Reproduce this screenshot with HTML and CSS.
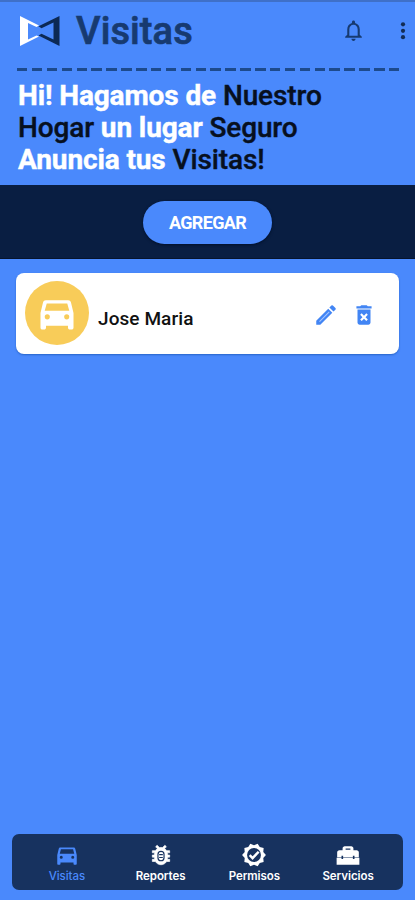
FILE: index.html
```html
<!DOCTYPE html>
<html lang="es">
<head>
<meta charset="utf-8">
<title>Visitas</title>
<link rel="stylesheet" href="styles.css">
</head>
<body>
<svg class="defs" width="0" height="0">
<symbol id="car" viewBox="0 0 24 24"><path d="M19.600 6.200C19.400 5.500 18.900 5 18.100 5H5.900c-.8 0-1.300.5-1.500 1.200L3 12v8c0 .55.45 1 1 1h1c.55 0 1-.45 1-1v-1h12v1c0 .55.45 1 1 1h1c.55 0 1-.45 1-1v-8zM6.700 15.500a1.400 1.400 0 1 1 0-2.800 1.400 1.400 0 0 1 0 2.800zm10.600 0a1.400 1.400 0 1 1 0-2.800 1.400 1.400 0 0 1 0 2.800zM5.300 10.800l1.100-4h11.200l1.100 4z"/></symbol>
</svg>
<div class="app">
<header class="top">
<svg class="logo" viewBox="0 0 40 32"><path fill="#fff" fill-rule="evenodd" d="M0 1l19 9.500-2.500 1.500-8.500-4v16.500l8.500-4 2.500 1L0 31z"/><path fill="#0c2954" fill-rule="evenodd" d="M39.500 1v30L18.500 20.500l3-1.800 12 5.800V7.500L21.500 13.300l-3-2z"/></svg>
<h1>Visitas</h1>
<svg class="bell" viewBox="0 0 24 24"><path d="M12 22c1.100 0 2-.9 2-2h-4c0 1.100.9 2 2 2zm6-6v-5c0-3.070-1.630-5.640-4.500-6.320V4c0-.83-.67-1.500-1.500-1.500s-1.500.67-1.500 1.500v.68C7.640 5.360 6 7.920 6 11v5l-2 2v1h16v-1zm-2 1H8v-6c0-2.480 1.510-4.500 4-4.500s4 2.020 4 4.500z"/></svg>
<svg class="more" viewBox="0 0 6 20"><circle cx="3" cy="3.300" r="2.100"/><circle cx="3" cy="9.800" r="2.100"/><circle cx="3" cy="16.200" r="2.100"/></svg>
</header>
<div class="dashes"></div>
<h2><span>Hi! Hagamos de <b>Nuestro</b></span><span><b>Hogar</b> un lugar <b>Seguro</b></span><span>Anuncia tus <b>Visitas!</b></span></h2>
<section class="band"><button>AGREGAR</button></section>
<article class="card">
<div class="avatar"><svg><use href="#car"/></svg></div>
<p>Jose Maria</p>
<svg class="act edit" viewBox="0 0 24 24"><path d="M3 17.250V21h3.750L17.810 9.940l-3.750-3.750zM20.710 7.040a1 1 0 0 0 0-1.410l-2.340-2.340a1 1 0 0 0-1.410 0l-1.830 1.830 3.750 3.750z"/><path d="M6 18.200 15 9.200" stroke="#a9c7ff" stroke-width="1"/></svg>
<svg class="act" viewBox="0 0 24 24"><path fill-rule="evenodd" d="M6 19c0 1.100.9 2 2 2h8c1.100 0 2-.9 2-2V7H6zm2.460-7.120 1.410-1.410L12 12.590l2.120-2.120 1.410 1.410L13.410 14l2.120 2.120-1.410 1.410L12 15.410l-2.120 2.120-1.410-1.410L10.590 14zM15.500 4l-1-1h-5l-1 1H5v2h14V4z"/></svg>
</article>
<nav>
<a class="on"><svg><use href="#car"/></svg><span>Visitas</span></a>
<a><svg viewBox="0 0 24 24"><path d="M20 8h-2.810a5.990 5.990 0 0 0-1.820-1.960L17 4.410 15.590 3l-2.170 2.170a6 6 0 0 0-2.830 0L8.410 3 7 4.410l1.620 1.630C7.880 6.550 7.260 7.220 6.810 8H4v2h2.090c-.05.330-.09.660-.09 1v1H4v2h2v1c0 .34.040.67.090 1H4v2h2.810a6 6 0 0 0 10.380 0H20v-2h-2.090c.05-.33.090-.66.090-1v-1h2v-2h-2v-1c0-.34-.04-.67-.09-1H20z" stroke="#fff" stroke-width=".6"/><path d="M9.200 11.500v3a2.800 2.800 0 0 0 5.600 0v-3a2.800 2.800 0 0 0-5.600 0zM10.300 11.700h3.400M10.300 14.300h3.400" fill="none" stroke="#17325f" stroke-width="1.100"/></svg><span>Reportes</span></a>
<a><svg viewBox="0 0 24 24"><path d="m23 12-2.440-2.780.34-3.680-3.610-.82-1.890-3.180L12 3 8.600 1.540 6.710 4.720l-3.610.81.340 3.680L1 12l2.440 2.780-.34 3.690 3.610.82 1.890 3.180L12 21l3.400 1.460 1.890-3.180 3.610-.82-.34-3.680z"/><circle cx="12" cy="12" r="6.400" fill="#17325f"/><path d="m8 12.200 2.700 2.700 5.600-5.900" fill="none" stroke="#fff" stroke-width="2.300"/></svg><span>Permisos</span></a>
<a><svg viewBox="0 0 24 24"><path fill-rule="evenodd" d="M20 7.500h-3V6c0-1.100-.9-2-2-2H9c-1.100 0-2 .9-2 2v1.500H4c-1.100 0-2 .9-2 2V14h4v-1.200h1.500V14h9v-1.200H18V14h4V9.500c0-1.100-.9-2-2-2zM9.800 6h4.400v1.200H9.800zM1.500 14.600h4.500v1.200h1.500v-1.200h9v1.200H18v-1.200h4.500V21h-21z"/></svg><span>Servicios</span></a>
</nav>
</div>
</body>
</html>
```
FILE: styles.css
```css
* { box-sizing: border-box; }
body { margin: 0; font-family: Roboto, sans-serif; background: #4a89fc; }
.defs { position: absolute; }
.app { width: 415px; height: 900px; display: flex; flex-direction: column; border-top: 2px solid #3f70c8; background: #4a89fc; overflow: hidden; }
h1, h2, p { margin: 0; }
.top { height: 66px; flex: none; display: flex; align-items: flex-start; padding-left: 20px; }
.logo { width: 40px; height: 32px; margin-top: 13px; }
h1 { width: 277px; padding-left: 16px; margin-top: 6px; font-size: 38px; line-height: 46px; font-weight: 500; color: #173a70; letter-spacing: .1px; -webkit-text-stroke: .7px #173a70; }
.bell { width: 25px; height: 25px; margin: 16px 0 0 4px; fill: #173a70; }
.more { width: 6px; height: 20px; margin: 19px 0 0 34px; fill: #122c55; }
.dashes { height: 3px; flex: none; margin: 0 16px 0 17px; background: repeating-linear-gradient(90deg, #1d4a8c 0 10.500px, transparent 10.500px 14.880px); }
h2 { height: 114px; flex: none; padding: 9px 0 0 18px; font-size: 28px; line-height: 32px; font-weight: 700; color: #fff; letter-spacing: -.12px; -webkit-text-stroke: .4px currentColor; }
h2 span { display: block; width: max-content; }
h2 b { font-weight: 500; color: #07101f; }
.band { height: 74px; flex: none; display: flex; justify-content: center; align-items: center; background: #091e42; border-bottom: 1px solid #06142d; }
button { width: 129px; height: 43px; margin-top: 1px; padding: 1px 0 0; border: 0; border-radius: 22px; background: #4a89fc; color: #fff; font: 700 18px Roboto, sans-serif; letter-spacing: -.65px; box-shadow: 0 1px 3px #02102b; }
.card { height: 81px; flex: none; margin: 13.500px 16px 0; padding-left: 9px; background: #fff; border-radius: 8px; display: flex; align-items: center; box-shadow: 0 1px 2px #2865c9; }
.avatar { width: 64px; height: 64px; border-radius: 50%; background: #f8cc59; display: flex; align-items: center; justify-content: center; }
.avatar svg { width: 44px; height: 44px; fill: #fff; }
.card p { width: 229px; padding: 11px 0 0 9px; font-size: 19px; line-height: 24px; font-weight: 500; color: #111; letter-spacing: .08px; }
.act { width: 26px; height: 26px; fill: #4285f4; margin: 4px 0 0; }
.edit { margin-right: 12px; margin-left: -5px; }
nav { margin: auto 12px 10px; height: 56px; flex: none; padding: 0 8px 0 8px; display: grid; grid-template-columns: repeat(4, 1fr); border-radius: 7px; background: #17325f; }
nav a { display: flex; flex-direction: column; align-items: center; padding-top: 8px; color: #fff; font: 600 11.500px/16px Inter, sans-serif; letter-spacing: -.05px; }
nav svg { width: 26px; height: 26px; fill: currentColor; }
nav .on { color: #4a89fc; font-weight: 500; }
```
